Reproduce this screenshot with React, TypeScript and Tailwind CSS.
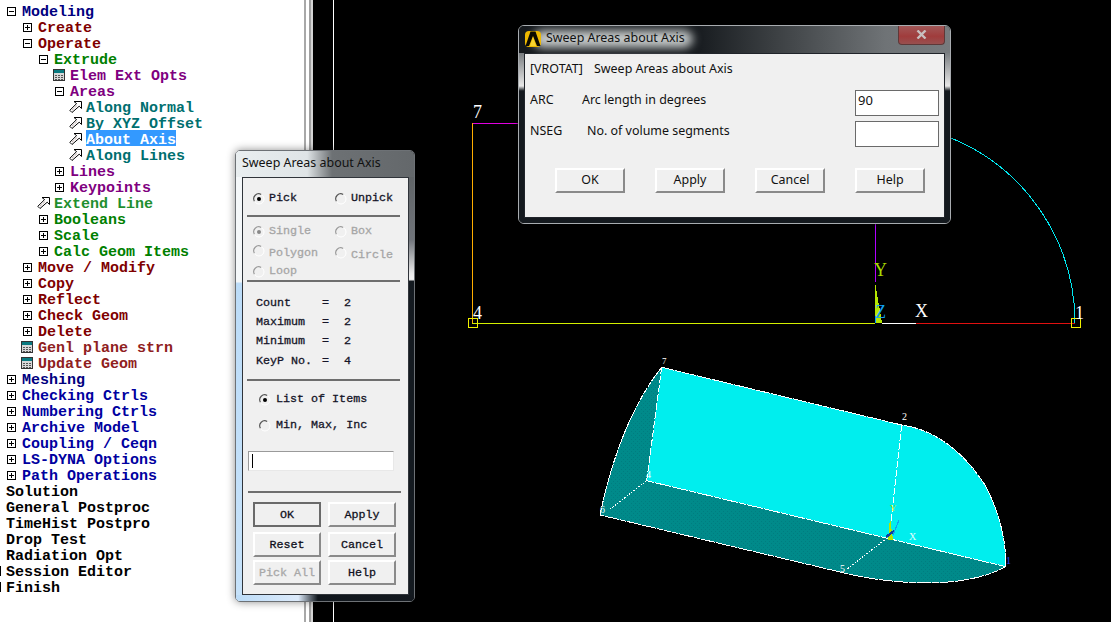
import React from "react";

const MONO = "font-['Liberation_Mono','Courier_New',monospace]";
const UI = "font-['Noto_Sans','Liberation_Sans',sans-serif]";

type Icon = "plus" | "minus" | "calc" | "arrow" | "none";

type TreeRow = {
  label: string;
  indent: number; // icon x offset
  textX: number;
  icon: Icon;
  color: string;
  selected?: boolean;
  tick?: boolean;
};

const NAVY = "text-[#00007f]";
const BLUE = "text-[#0000a0]";
const MAROON = "text-[#7f0000]";
const BROWN = "text-[#8f2020]";
const GREEN = "text-[#007f00]";
const LIGHTGREEN = "text-[#1f8f2f]";
const PURPLE = "text-[#7f007f]";
const TEAL = "text-[#006f6f]";
const BLACK = "text-black";

const rows: TreeRow[] = [
  { label: "Modeling", indent: 7, textX: 22, icon: "minus", color: NAVY },
  { label: "Create", indent: 23, textX: 38, icon: "plus", color: MAROON },
  { label: "Operate", indent: 23, textX: 38, icon: "minus", color: MAROON },
  { label: "Extrude", indent: 39, textX: 54, icon: "minus", color: GREEN },
  { label: "Elem Ext Opts", indent: 53, textX: 70, icon: "calc", color: PURPLE },
  { label: "Areas", indent: 55, textX: 70, icon: "minus", color: PURPLE },
  { label: "Along Normal", indent: 69, textX: 86, icon: "arrow", color: TEAL },
  { label: "By XYZ Offset", indent: 69, textX: 86, icon: "arrow", color: TEAL },
  { label: "About Axis", indent: 69, textX: 86, icon: "arrow", color: TEAL, selected: true },
  { label: "Along Lines", indent: 69, textX: 86, icon: "arrow", color: TEAL },
  { label: "Lines", indent: 55, textX: 70, icon: "plus", color: PURPLE },
  { label: "Keypoints", indent: 55, textX: 70, icon: "plus", color: PURPLE },
  { label: "Extend Line", indent: 37, textX: 54, icon: "arrow", color: LIGHTGREEN },
  { label: "Booleans", indent: 39, textX: 54, icon: "plus", color: GREEN },
  { label: "Scale", indent: 39, textX: 54, icon: "plus", color: GREEN },
  { label: "Calc Geom Items", indent: 39, textX: 54, icon: "plus", color: GREEN },
  { label: "Move / Modify", indent: 23, textX: 38, icon: "plus", color: MAROON },
  { label: "Copy", indent: 23, textX: 38, icon: "plus", color: MAROON },
  { label: "Reflect", indent: 23, textX: 38, icon: "plus", color: MAROON },
  { label: "Check Geom", indent: 23, textX: 38, icon: "plus", color: MAROON },
  { label: "Delete", indent: 23, textX: 38, icon: "plus", color: MAROON },
  { label: "Genl plane strn", indent: 21, textX: 38, icon: "calc", color: BROWN },
  { label: "Update Geom", indent: 21, textX: 38, icon: "calc", color: BROWN },
  { label: "Meshing", indent: 7, textX: 22, icon: "plus", color: NAVY },
  { label: "Checking Ctrls", indent: 7, textX: 22, icon: "plus", color: BLUE },
  { label: "Numbering Ctrls", indent: 7, textX: 22, icon: "plus", color: BLUE },
  { label: "Archive Model", indent: 7, textX: 22, icon: "plus", color: BLUE },
  { label: "Coupling / Ceqn", indent: 7, textX: 22, icon: "plus", color: BLUE },
  { label: "LS-DYNA Options", indent: 7, textX: 22, icon: "plus", color: BLUE },
  { label: "Path Operations", indent: 7, textX: 22, icon: "plus", color: BLUE },
  { label: "Solution", indent: 0, textX: 6, icon: "none", color: BLACK },
  { label: "General Postproc", indent: 0, textX: 6, icon: "none", color: BLACK },
  { label: "TimeHist Postpro", indent: 0, textX: 6, icon: "none", color: BLACK },
  { label: "Drop Test", indent: 0, textX: 6, icon: "none", color: BLACK },
  { label: "Radiation Opt", indent: 0, textX: 6, icon: "none", color: BLACK },
  { label: "Session Editor", indent: 0, textX: 6, icon: "none", color: BLACK, tick: true },
  { label: "Finish", indent: 0, textX: 6, icon: "none", color: BLACK, tick: true },
];

const ExpandBox = ({ open }: { open: boolean }) => (
  <svg width="9" height="9" viewBox="0 0 9 9" className="block" shapeRendering="crispEdges">
    <rect x="0.5" y="0.5" width="8" height="8" fill="#fff" stroke="#000" />
    <path d="M2 4.5H7" stroke="#000" />
    {!open && <path d="M4.5 2V7" stroke="#000" />}
  </svg>
);

const CalcIcon = () => (
  <svg width="12" height="12" viewBox="0 0 12 12" className="block" shapeRendering="crispEdges">
    <rect x="0.5" y="0.5" width="11" height="11" fill="#d8d8d8" stroke="#333" />
    <rect x="1" y="1" width="10" height="3" fill="#0a7a80" />
    <path d="M2 6H10M2 8H10M2 10H10" stroke="#555" strokeDasharray="2 1" />
  </svg>
);

const ArrowIcon = () => (
  <svg width="13" height="12" viewBox="0 0 13 12" className="block">
    <path d="M5 0.5H12.5V7.5L10.2 5.2L3 11.5L0.8 9.3L7.6 2.6Z" fill="#fff" stroke="#000" strokeWidth="1" />
    <path d="M3 9.2L8.6 4" stroke="#a08080" strokeDasharray="1 1" />
  </svg>
);

const TreeItem = ({ row }: { row: TreeRow }) => (
  <div className="relative flex h-[16px] items-center">
    {row.tick && <span className="h-[10px] w-px bg-black" />}
    <span className="flex w-[13px] shrink-0 items-center" style={{ marginLeft: row.indent }}>
      {row.icon === "plus" && <ExpandBox open={false} />}
      {row.icon === "minus" && <ExpandBox open />}
      {row.icon === "calc" && <CalcIcon />}
      {row.icon === "arrow" && <ArrowIcon />}
    </span>
    <span
      className={`absolute top-[-1px] h-[16px] text-[15px] leading-[21px] font-bold whitespace-pre ${
        row.selected ? "bg-[#3399ff] text-white" : row.color
      }`}
      style={{ left: row.textX }}
    >
      {row.label}
    </span>
  </div>
);

const Radio = ({ checked, disabled }: { checked?: boolean; disabled?: boolean }) => (
  <svg width="12" height="12" viewBox="0 0 12 12" className="block shrink-0">
    <circle cx="6" cy="6" r="5" fill="#f0f0f0" stroke="#fff" />
    <path d="M1.4 8.2A5 5 0 0 1 8.2 1.4" fill="none" stroke={disabled ? "#999" : "#555"} strokeWidth="1.2" />
    {checked && <circle cx="6" cy="6" r="2" fill={disabled ? "#888" : "#000"} />}
  </svg>
);

const Rule = ({ className = "" }: { className?: string }) => (
  <div className={`h-[2px] bg-[#6e6e6e] ${className}`} />
);

const PickButton = ({
  label,
  focused,
  disabled,
}: {
  label: string;
  focused?: boolean;
  disabled?: boolean;
}) => (
  <div
    className={`flex h-[25px] w-[68px] items-center justify-center border-2 bg-[#f0f0f0] pt-[2px] text-[11.7px] ${
      focused
        ? "border-[#6a6a6a]"
        : "border-t-white border-l-white border-r-[#8a8a8a] border-b-[#8a8a8a]"
    } ${disabled ? "text-[#a8a8a8]" : "text-[#101020]"}`}
  >
    {label}
  </div>
);

const StatRow = ({ label, value }: { label: string; value: string }) => (
  <div className="flex h-[19.3px] items-center whitespace-pre">
    <span className="w-[66px]">{label}</span>
    <span className="w-[22px]">=</span>
    <span>{value}</span>
  </div>
);

const PickDialog = () => (
  <div className="absolute top-[150px] left-[235px] flex h-[452px] w-[180px] flex-col overflow-hidden rounded-[5px] border border-[#6d7175] shadow-[0_0_8px_rgba(0,0,0,0.45)]">
    <div className="flex h-[26px] shrink-0 items-center bg-[linear-gradient(to_right,#e9eef0_0%,#dfe4e6_40%,#6d7174_54%,#64686b_100%)] pb-[2px] pl-[6px]">
      <span className={`${UI} text-[12.45px] text-[#111]`}>Sweep Areas about Axis</span>
    </div>
    <div className="flex min-h-0 flex-1">
      <div className="w-[6px] shrink-0 bg-[linear-gradient(to_bottom,#f4f7f9_0%,#f4f7f9_25%,#bcdcf8_25.5%,#c6e2fa_100%)]" />
      <div className={`${MONO} flex min-w-0 flex-1 flex-col border border-[#30343a] bg-[#f0f0f0] pt-[14px] text-[11.7px] text-[#151528] [-webkit-text-stroke:0.3px_currentColor]`}>
        <div className="flex h-[14px] items-center pl-[10px]">
          <Radio checked />
          <span className="ml-[4px] w-[66px]">Pick</span>
          <Radio />
          <span className="ml-[4px]">Unpick</span>
        </div>
        <Rule className="mt-[9px] mr-[8px] ml-[4px]" />
        <div className="mt-[8px] flex h-[14px] items-center pl-[10px] text-[#a6a6a6]">
          <Radio checked disabled />
          <span className="ml-[4px] w-[66px]">Single</span>
          <Radio disabled />
          <span className="ml-[4px]">Box</span>
        </div>
        <div className="mt-[6px] flex h-[16px] items-start pl-[10px] text-[#a6a6a6]">
          <Radio disabled />
          <span className="ml-[4px] w-[66px]">Polygon</span>
          <span className="mt-[2px]">
            <Radio disabled />
          </span>
          <span className="mt-[2px] ml-[4px]">Circle</span>
        </div>
        <div className="mt-[4px] flex h-[14px] items-center pl-[10px] text-[#a6a6a6]">
          <Radio disabled />
          <span className="ml-[4px]">Loop</span>
        </div>
        <Rule className="mt-[1px] mr-[8px] ml-[4px]" />
        <div className="mt-[12px] pl-[13px]">
          <StatRow label="Count" value="2" />
          <StatRow label="Maximum" value="2" />
          <StatRow label="Minimum" value="2" />
          <StatRow label="KeyP No." value="4" />
        </div>
        <Rule className="mt-[8px] mr-[8px] ml-[4px]" />
        <div className="mt-[12px] flex h-[14px] items-center pl-[16px]">
          <Radio checked />
          <span className="ml-[5px]">List of Items</span>
        </div>
        <div className="mt-[12px] flex h-[14px] items-center pl-[16px]">
          <Radio />
          <span className="ml-[5px]">Min, Max, Inc</span>
        </div>
        <div className="mt-[18px] ml-[5px] flex h-[20px] w-[146px] items-center border border-t-[#9a9a9a] border-r-[#e8e8e8] border-b-[#e8e8e8] border-l-[#9a9a9a] bg-white pl-[3px]">
          <span className="h-[14px] w-px bg-black" />
        </div>
        <Rule className="mt-[20px] mr-[7px] ml-[5px]" />
        <div className="mt-[9px] ml-[10px] grid w-[143px] grid-cols-[68px_68px] gap-x-[7px]">
          <PickButton label="OK" focused />
          <PickButton label="Apply" />
          <div className="mt-[5px]">
            <PickButton label="Reset" />
          </div>
          <div className="mt-[5px]">
            <PickButton label="Cancel" />
          </div>
          <div className="mt-[3px]">
            <PickButton label="Pick All" disabled />
          </div>
          <div className="mt-[3px]">
            <PickButton label="Help" />
          </div>
        </div>
      </div>
      <div className="w-[5px] shrink-0 bg-[linear-gradient(to_bottom,#606467_0%,#70747a_15%,#e8e8e8_23%,#f2f2f2_24.5%,#141a20_25%,#141a20_100%)]" />
    </div>
    <div className="h-[6px] shrink-0 bg-[linear-gradient(to_right,#bcdcf8_0%,#dceafa_35%,#10161c_46%,#14191f_100%)]" />
  </div>
);

const AnsysLogo = () => (
  <svg width="16" height="16" viewBox="0 0 16 16" className="block shrink-0">
    <rect x="0" y="0" width="16" height="16" rx="4" fill="#eeb800" />
    <path d="M5.5 0.5H10.5L15.5 15H12L8 5L4 15H0.5Z" fill="#0c0a00" />
    <path d="M8 6L11 15H5Z" fill="#f8d430" />
  </svg>
);

const WinButton = ({ label }: { label: string }) => (
  <div className="flex h-[25px] w-[70px] items-center justify-center border-2 border-t-white border-r-[#8a8a8a] border-b-[#8a8a8a] border-l-white bg-[#f0f0f0] pb-[1px]">
    {label}
  </div>
);

const FieldRow = ({
  code,
  gap,
  label,
  value,
  className,
}: {
  code: string;
  gap: string;
  label: string;
  value?: string;
  className?: string;
}) => (
  <div className={`flex h-[26px] items-start ${className}`}>
    <span className={`pt-[1px] ${gap}`}>{code}</span>
    <span className="flex-1 pt-[1px]">{label}</span>
    <div className="mr-[5px] h-[26px] w-[84px] border border-[#6a6a6a] bg-white pt-[1px] pl-[2px] text-[13px] leading-[16px]">
      {value}
    </div>
  </div>
);

const SweepDialog = () => (
  <div className="absolute top-[25px] left-[518px] flex h-[199px] w-[433px] flex-col overflow-hidden rounded-[6px] border border-[#a8acb0] shadow-[0_0_3px_#000]">
    <div className="relative flex h-[27px] shrink-0 items-center bg-[linear-gradient(to_right,#15191d_0%,#15191d_40%,#3d4144_60%,#6f7376_85%,#777b7e_100%)] pl-[6px]">
      <div className="absolute top-[4px] left-[14px] h-[18px] w-[160px] rounded-full bg-[#c4c8c8] blur-[5px]" />
      <div className="relative flex items-center gap-[5px]">
        <AnsysLogo />
        <span className={`${UI} pb-[2px] text-[12.45px] text-[#111]`}>Sweep Areas about Axis</span>
      </div>
      <div className="absolute top-[-1px] right-[5px] flex h-[20px] w-[47px] items-center justify-center rounded-b-[4px] border border-t-0 border-[#5e3838] bg-[linear-gradient(to_bottom,#a25a5a,#a03c3c_60%,#98504f)]">
        <svg width="11" height="9" viewBox="0 0 11 9">
          <path d="M1.5 0.5L9.5 8.5M9.5 0.5L1.5 8.5" stroke="#c8c0c0" strokeWidth="2.4" />
        </svg>
      </div>
    </div>
    <div className="flex min-h-0 flex-1">
      <div className="w-[5px] shrink-0 bg-[linear-gradient(to_bottom,#787c7f_0%,#e8e8e8_20%,#14191e_23%,#14191e_100%)]" />
      <div className={`${UI} flex min-w-0 flex-1 flex-col border border-[#20242a] bg-[#f0f0f0] pl-[5px] text-[12.45px] text-[#111]`}>
        <div className="mt-[6px] flex h-[16px] items-center whitespace-pre pt-[2px]">
          <span className="w-[64px]">[VROTAT]</span>
          <span>Sweep Areas about Axis</span>
        </div>
        <FieldRow code="ARC" gap="w-[52px]" label="Arc length in degrees" value="90" className="mt-[14px]" />
        <FieldRow code="NSEG" gap="w-[57px]" label="No. of volume segments" className="mt-[5px]" />
        <div className="mt-[21px] ml-[25px] flex gap-[30px]">
          <WinButton label="OK" />
          <WinButton label="Apply" />
          <WinButton label="Cancel" />
          <WinButton label="Help" />
        </div>
      </div>
      <div className="w-[5px] shrink-0 bg-[linear-gradient(to_bottom,#7a7e81_0%,#e8e8e8_20%,#14191e_23%,#14191e_100%)]" />
    </div>
    <div className="h-[5px] shrink-0 bg-[#14191e]" />
  </div>
);

const labelClass = "font-['Liberation_Serif',serif]";

// everything in the viewport is page coordinates, so the model can be read against the screenshot
const Viewport = () => (
  <svg viewBox="334 0 777 622" className="block h-full w-full" shapeRendering="crispEdges">
    <defs>
      <pattern id="dither" width="4" height="4" patternUnits="userSpaceOnUse">
        <rect width="4" height="4" fill="#008a8a" />
        <rect width="1" height="1" x="1" y="1" fill="#007d80" />
        <rect width="1" height="1" x="3" y="3" fill="#007d80" />
      </pattern>
    </defs>

    {/* 2D view */}
    <path d="M472.5 323V123" stroke="#ffae00" fill="none" />
    <path d="M473 123.5H518" stroke="#e000e0" fill="none" />
    <path d="M875.5 224V282" stroke="#b000ff" fill="none" />
    <path d="M951 138A200 200 0 0 1 1075 323" stroke="#00e8f0" fill="none" />
    <path d="M472 323.5H875" stroke="#d4f000" fill="none" />
    <path d="M875 282L875 323L882 323Z" fill="#b4e600" />
    <path d="M882 323.5H916" stroke="#fff" fill="none" />
    <path d="M916 323.5H1075" stroke="#e01010" fill="none" />
    <path d="M875.5 316V323" stroke="#00a0ff" fill="none" />
    <rect x="468" y="318.5" width="9" height="9" fill="none" stroke="#f0f000" />
    <rect x="1071" y="318.5" width="9" height="9" fill="none" stroke="#f0f000" />
    <text x="473" y="118" fontSize="18" fill="#fff" className={labelClass}>7</text>
    <text x="473" y="319" fontSize="18" fill="#fff" className={labelClass}>4</text>
    <text x="1075" y="319" fontSize="18" fill="#fff" className={labelClass}>1</text>
    <text x="874" y="276" fontSize="18" fill="#a8dc00" className={labelClass}>Y</text>
    <text x="915" y="317" fontSize="18" fill="#fff" className={labelClass}>X</text>
    <text x="875" y="318" fontSize="18" fill="#10a0f0" className={labelClass}>Z</text>

    {/* 3D model */}
    <path d="M600 515Q620 420 661.7 367.3L646.7 480.7Z" fill="url(#dither)" />
    <path d="M646.7 480.7L600 515L843 572.7Q880 582 925 583Q975 583 1006 566.7Z" fill="url(#dither)" />
    <path
      d="M661.7 367.3L901.7 425Q950 432 985 485Q1006 525 1006 566.7L886.7 538.3L646.7 480.7Z"
      fill="#00eeee"
      shapeRendering="auto"
    />
    <path
      d="M600 515Q620 420 661.7 367.3L901.7 425Q950 432 985 485Q1006 525 1006 566.7Q975 583 925 583Q880 582 843 572.7L600 515"
      fill="none"
      stroke="#fff"
      strokeDasharray="7 0.6"
    />
    <path d="M646.7 480.7L1006 566.7" stroke="#fff" strokeDasharray="8 0.6" />
    <path d="M661.7 367.3L646.7 480.7M901.7 425L890 530" stroke="#fff" strokeDasharray="7 2" />
    <path d="M646.7 480.7L609 510M886.7 538.3L846 570" stroke="#fff" strokeDasharray="1.5 1.5" />
    <path d="M888 540L890 517L893 540Z" fill="#b4e600" />
    <path d="M886 537L894 531" stroke="#1040a0" strokeWidth="2.4" />
    <path d="M893 535L899 520" stroke="#10a0f0" />
    <text x="662" y="364" fontSize="9" fill="#fff" className={labelClass}>7</text>
    <text x="902" y="420" fontSize="10" fill="#fff" className={labelClass}>2</text>
    <text x="1006" y="564" fontSize="10" fill="#2040ff" className={labelClass}>1</text>
    <text x="646" y="478" fontSize="10" fill="#fff" className={labelClass}>4</text>
    <text x="600" y="513" fontSize="10" fill="#e0ffff" className={labelClass}>6</text>
    <text x="840" y="572" fontSize="10" fill="#fff" className={labelClass}>5</text>
    <text x="909" y="540" fontSize="10" fill="#e0ffff" className={labelClass}>X</text>
    <text x="890" y="511" fontSize="9" fill="#b4e600" className={labelClass}>Y</text>
  </svg>
);

export default function App() {
  return (
    <div className={`${MONO} relative flex h-[622px] w-[1111px] overflow-hidden bg-black`}>
      <aside className="w-[304px] shrink-0 bg-white pt-[3px]">
        {rows.map((row) => (
          <TreeItem key={row.label} row={row} />
        ))}
      </aside>
      {/* sash between the menu and the graphics window */}
      <div className="h-full w-[2px] shrink-0 bg-[#a8a8a8]" />
      <div className="h-full w-[3px] shrink-0 bg-white" />
      <div className="h-full w-[2px] shrink-0 bg-[#a0a0a0]" />
      <div className="h-full w-[2px] shrink-0 bg-[#d4d4d4]" />
      <div className="h-full w-[20px] shrink-0 bg-black" />
      <div className="h-full w-px shrink-0 bg-white" />
      <main className="min-w-0 flex-1">
        <Viewport />
      </main>
      <SweepDialog />
      <PickDialog />
    </div>
  );
}
